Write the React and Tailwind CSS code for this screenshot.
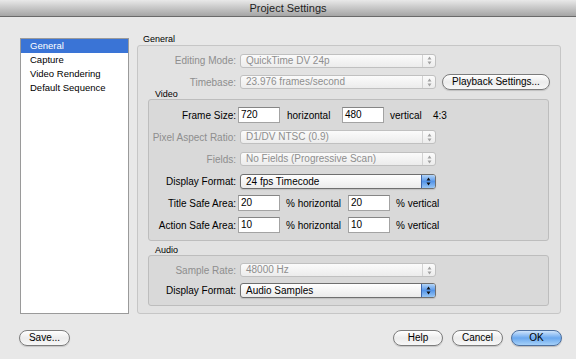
import React from 'react';

const FONT = "font-['Liberation_Sans',Arial,sans-serif]";

function Arrows({ color }) {
  return (
    <svg width="5" height="9" viewBox="0 0 5 9">
      <path d="M0.5 3.5L2.5 0.5L4.5 3.5Z M0.5 5.5L2.5 8.5L4.5 5.5Z" fill={color} />
    </svg>
  );
}

function Select({ value, active }) {
  if (active) {
    return (
      <div className="flex h-[15px] w-[196px] overflow-hidden rounded-[3px] border border-[#6f6f6f] bg-linear-to-b from-white to-[#ebebeb] shadow-[0_1px_1px_rgba(0,0,0,0.12)]">
        <div className="flex-1 pl-[5px] text-[10px] leading-[13px] text-black">{value}</div>
        <div className="flex w-[14px] items-center justify-center border-l border-[#3d66ad] bg-linear-to-b from-[#b4d5f7] via-[#5595e8] to-[#98c6f4]">
          <Arrows color="#101010" />
        </div>
      </div>
    );
  }
  return (
    <div className="flex h-[14px] w-[196px] overflow-hidden rounded-[3px] border border-[#c0c0c0] bg-linear-to-b from-[#fbfbfb] to-[#ececec]">
      <div className="flex-1 pl-[5px] text-[10px] leading-[12px] text-[#8e8e8e]">{value}</div>
      <div className="flex w-[13px] items-center justify-center border-l border-[#d2d2d2]">
        <Arrows color="#a2a2a2" />
      </div>
    </div>
  );
}

function Field({ value }) {
  return (
    <div className="h-[16px] w-[42px] border border-[#a3a3a3] border-t-[#858585] bg-white pl-[2px] text-[10px] leading-[14px] text-black">
      {value}
    </div>
  );
}

function Pill({ children, className, primary }) {
  return (
    <div
      className={`h-[16px] rounded-full border text-center text-[10px] leading-[14px] text-black ${
        primary
          ? 'border-[#4d6f9e] bg-linear-to-b from-[#cfe4fb] via-[#6aa8ee] to-[#a5d0f8] shadow-[0_1px_1px_rgba(0,0,0,0.2)]'
          : 'border-[#7c7c7c] bg-linear-to-b from-white via-[#ececec] to-[#f7f7f7] shadow-[0_1px_1px_rgba(0,0,0,0.15)]'
      } ${className}`}
    >
      {children}
    </div>
  );
}

function Label({ children, className, dim }) {
  return (
    <div className={`text-right text-[10px] ${dim ? 'text-[#8e8e8e]' : 'text-black'} ${className}`}>{children}</div>
  );
}

const sidebar = ['General', 'Capture', 'Video Rendering', 'Default Sequence'];

export default function App() {
  return (
    <div className={`flex h-[359px] w-[576px] flex-col overflow-hidden bg-[#e8e8e8] ${FONT}`}>
      {/* Title bar */}
      <div className="flex h-[17px] items-center justify-center border-b border-[#6a6a6a] bg-linear-to-b from-[#e9e9e9] to-[#a5a5a5] text-[11px] text-[#1e1e1e]">
        Project Settings
      </div>

      <div className="flex pl-[20px] pt-[16px]">
        {/* Category list */}
        <div className="mt-[5px] h-[276px] w-[109px] border border-[#9a9a9a] bg-white">
          {sidebar.map((s, i) => (
            <div
              key={s}
              className={`h-[14px] pl-[9px] text-[9.5px] leading-[14px] ${
                i === 0 ? 'bg-[#3a74d6] text-white' : 'text-black'
              }`}
            >
              {s}
            </div>
          ))}
        </div>

        {/* Right column */}
        <div className="ml-[8px] flex flex-col">
          <div className="h-[12px] pl-[6px] text-[9px] leading-[12px] text-black">General</div>
          <div className="flex h-[269px] w-[424px] flex-col rounded-[3px] border border-[#c6c6c6] bg-[#e2e2e2]">
            <div className="mt-[7px] flex items-center">
              <Label dim className="w-[102px] pr-[4px]">Editing Mode:</Label>
              <Select value="QuickTime DV 24p" />
            </div>
            <div className="mt-[6px] flex items-center">
              <Label dim className="w-[102px] pr-[4px]">Timebase:</Label>
              <Select value="23.976 frames/second" />
              <Pill className="ml-[6px] w-[108px]">Playback Settings...</Pill>
            </div>

            <div className="h-[9px] pl-[17px] text-[9px] leading-[9px] text-black">Video</div>
            <div className="ml-[10px] flex h-[142px] w-[401px] flex-col rounded-[3px] border border-[#bdbdbd] bg-[#d9d9d9] pt-[4px]">
              <div className="flex h-[22px] items-center">
                <Label className="w-[89px] pr-[2px]">Frame Size:</Label>
                <Field value="720" />
                <span className="w-[62px] pl-[7px] text-[10px] text-black">horizontal</span>
                <Field value="480" />
                <span className="w-[49px] pl-[6px] text-[10px] text-black">vertical</span>
                <span className="text-[10px] text-black">4:3</span>
              </div>
              <div className="flex h-[22px] items-center">
                <Label dim className="w-[91px] pr-[4px]">Pixel Aspect Ratio:</Label>
                <Select value="D1/DV NTSC (0.9)" />
              </div>
              <div className="flex h-[22px] items-center">
                <Label dim className="w-[91px] pr-[4px]">Fields:</Label>
                <Select value="No Fields (Progressive Scan)" />
              </div>
              <div className="flex h-[22px] items-center">
                <Label className="w-[91px] pr-[4px]">Display Format:</Label>
                <Select active value="24 fps Timecode" />
              </div>
              <div className="flex h-[22px] items-center">
                <Label className="w-[89px] pr-[2px]">Title Safe Area:</Label>
                <Field value="20" />
                <span className="w-[68px] pl-[6px] text-[10px] text-black">% horizontal</span>
                <Field value="20" />
                <span className="pl-[6px] text-[10px] text-black">% vertical</span>
              </div>
              <div className="flex h-[22px] items-center">
                <Label className="w-[89px] pr-[2px]">Action Safe Area:</Label>
                <Field value="10" />
                <span className="w-[68px] pl-[6px] text-[10px] text-black">% horizontal</span>
                <Field value="10" />
                <span className="pl-[6px] text-[10px] text-black">% vertical</span>
              </div>
            </div>

            <div className="flex h-[14px] items-end pl-[17px] text-[9px] leading-[10px] text-black">Audio</div>
            <div className="ml-[10px] flex h-[51px] w-[401px] flex-col rounded-[3px] border border-[#bdbdbd] bg-[#d9d9d9] pt-[4px]">
              <div className="flex h-[20px] items-center">
                <Label dim className="w-[91px] pr-[4px]">Sample Rate:</Label>
                <Select value="48000 Hz" />
              </div>
              <div className="flex h-[21px] items-center">
                <Label className="w-[91px] pr-[4px]">Display Format:</Label>
                <Select active value="Audio Samples" />
              </div>
            </div>
          </div>
        </div>
      </div>

      {/* Bottom buttons */}
      <div className="mt-[16px] flex items-center pl-[19px] pr-[14px]">
        <Pill className="w-[51px]">Save...</Pill>
        <div className="flex-1" />
        <Pill className="w-[50px]">Help</Pill>
        <Pill className="ml-[9px] w-[51px]">Cancel</Pill>
        <Pill primary className="ml-[8px] w-[51px]">OK</Pill>
      </div>
    </div>
  );
}
